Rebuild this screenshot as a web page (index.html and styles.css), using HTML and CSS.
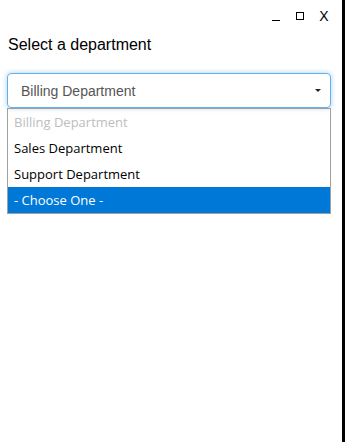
FILE: index.html
```html
<!DOCTYPE html>
<html>
<head>
<meta charset="utf-8">
<link rel="stylesheet" href="styles.css">
</head>
<body>
<div class="window">
  <div class="titlebar">
    <span class="ctl ctl-min"></span>
    <span class="ctl ctl-max"></span>
    <span class="ctl ctl-close">X</span>
  </div>
  <div class="content">
    <h1 class="label">Select a department</h1>
    <div class="select">
      <span class="select-value">Billing Department</span>
      <span class="caret"></span>
    </div>
    <ul class="options">
      <li class="option disabled">Billing Department</li>
      <li class="option">Sales Department</li>
      <li class="option">Support Department</li>
      <li class="option selected">- Choose One -</li>
    </ul>
  </div>
</div>
</body>
</html>
```
FILE: styles.css
```css
html, body {
  margin: 0;
  padding: 0;
  background: #fff;
}
.window {
  width: 345px;
  height: 442px;
  box-sizing: border-box;
  border-right: 3px solid #000;
  background: #fff;
}
.titlebar {
  display: flex;
  justify-content: flex-end;
  align-items: center;
  height: 32px;
  padding-right: 6px;
}
.ctl {
  display: flex;
  align-items: center;
  justify-content: center;
  width: 24px;
  height: 24px;
}
.ctl-min::before {
  content: "";
  display: block;
  width: 8px;
  height: 1px;
  background: #000;
  margin-top: 8px;
}
.ctl-max::before {
  content: "";
  display: block;
  width: 6px;
  height: 6px;
  border: 1px solid #000;
}
.ctl-close {
  font-family: "Liberation Sans", Arial, sans-serif;
  font-size: 14px;
  color: #000;
}
.content {
  padding: 0 11px 0 7px;
}
.label {
  margin: 4px 0 19px 1px;
  font-family: "Liberation Sans", Arial, sans-serif;
  font-size: 16px;
  font-weight: normal;
  line-height: 18px;
  color: #000;
}
.select {
  display: flex;
  align-items: center;
  justify-content: space-between;
  height: 35px;
  box-sizing: border-box;
  border: 1px solid #66afe9;
  border-radius: 4px;
  box-shadow: 0 0 5px rgba(102, 175, 233, 0.6);
  padding: 0 9px 0 13px;
  font-family: "Liberation Sans", Arial, sans-serif;
  font-size: 14px;
  color: #555;
}
.caret {
  width: 0;
  height: 0;
  border-left: 3px solid transparent;
  border-right: 3px solid transparent;
  border-top: 3px solid #222;
}
.options {
  list-style: none;
  margin: 0;
  padding: 0;
  border: 1px solid #a0a0a0;
  font-family: "Open Sans", "Noto Sans", sans-serif;
  font-size: 13px;
}
.option {
  height: 26px;
  line-height: 26px;
  padding-left: 6px;
  color: #000;
}
.option.disabled {
  color: #bdbdbd;
}
.option.selected {
  background: #0078d7;
  color: #fff;
}
```
